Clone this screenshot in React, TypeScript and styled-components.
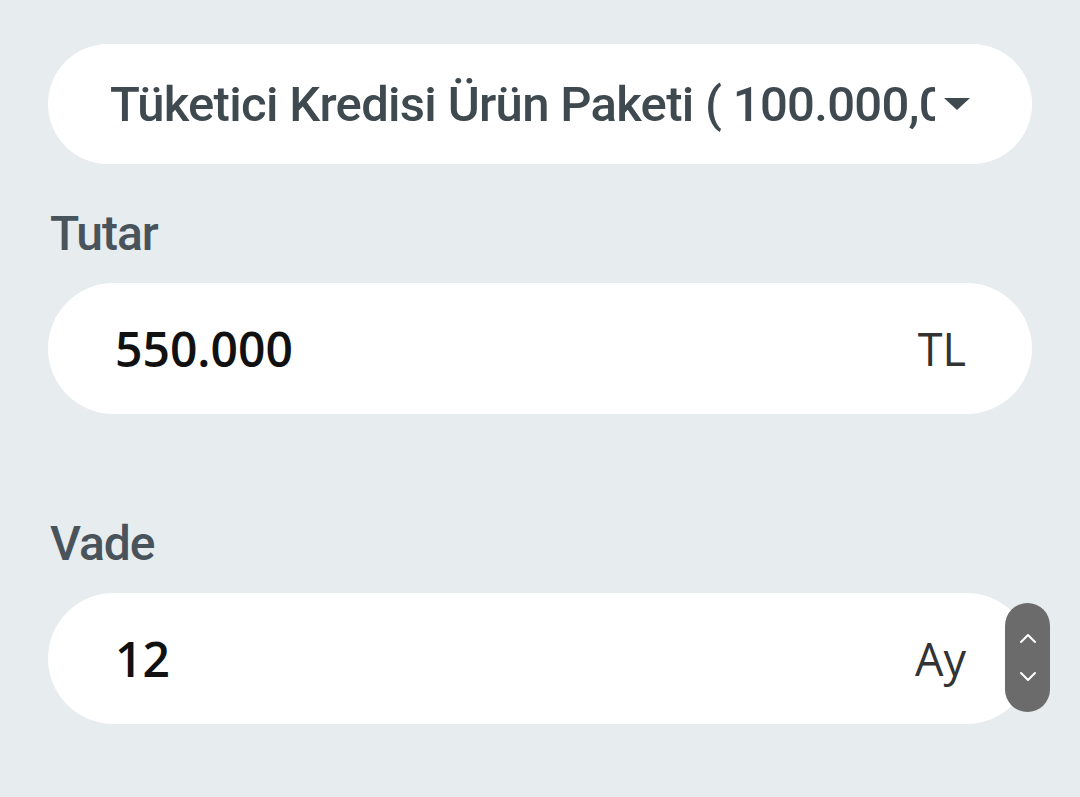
import React from "react";
import styled, { createGlobalStyle } from "styled-components";

const Global = createGlobalStyle`
  html, body { margin: 0; padding: 0; background: #e7ecef; }
  body { font-family: "Open Sans", "Noto Sans", sans-serif; }
`;

const Page = styled.div`
  width: 1080px;
  height: 797px;
  box-sizing: border-box;
  padding: 44px 48px 0 48px;
  display: flex;
  flex-direction: column;
  background: #e7ecef;
`;

const Select = styled.div`
  height: 120px;
  background: #fff;
  border-radius: 60px;
  display: flex;
  align-items: center;
  padding: 0 62px 0 62px;
  box-sizing: border-box;
`;

const SelectText = styled.div`
  flex: 1;
  min-width: 0;
  overflow: hidden;
  white-space: nowrap;
  font-family: "Roboto", sans-serif;
  font-weight: 500;
  font-size: 49px;
  color: #3f4950;
  letter-spacing: -0.7px;
`;

const Caret = styled.div`
  width: 0;
  height: 0;
  margin-left: 9px;
  border-left: 13px solid transparent;
  border-right: 13px solid transparent;
  border-top: 12px solid #3f4950;
`;

const Field = styled.div<{ $mb: number }>`
  display: flex;
  flex-direction: column;
  margin-bottom: ${(p) => p.$mb}px;
`;

const Label = styled.div`
  font-family: "Roboto", sans-serif;
  font-weight: 500;
  font-size: 48px;
  letter-spacing: -1px;
  color: #49535b;
  line-height: 60px;
  margin: 0 0 19px 2px;
`;

const InputRow = styled.div`
  position: relative;
  height: 131px;
  background: #fff;
  border-radius: 66px;
  display: flex;
  align-items: center;
  padding: 0 66px 0 67px;
  box-sizing: border-box;
`;

const Value = styled.div`
  flex: 1;
  font-family: "Open Sans", sans-serif;
  font-weight: 600;
  font-size: 48px;
  color: #111;
`;

const Unit = styled.div`
  font-family: "Open Sans", sans-serif;
  font-weight: 400;
  font-size: 45px;
  color: #333;
`;

const Spinner = styled.div`
  position: absolute;
  right: -18px;
  top: 10px;
  width: 45px;
  height: 109px;
  border-radius: 23px;
  background: #6b6b6b;
  display: flex;
  flex-direction: column;
  align-items: center;
  justify-content: center;
  gap: 27px;
`;

const Chevron = ({ up }: { up?: boolean }) => (
  <svg width="20" height="12" viewBox="0 0 20 12">
    <path
      d={up ? "M3 10 L10 3 L17 10" : "M3 2 L10 9 L17 2"}
      fill="none"
      stroke="#fff"
      strokeWidth="2"
      strokeLinecap="round"
      strokeLinejoin="round"
    />
  </svg>
);

export default function App() {
  return (
    <>
      <Global />
      <Page>
        <Field $mb={40}>
          <Select>
            <SelectText>Tüketici Kredisi Ürün Paketi ( 100.000,00 TL - 550.000,00 TL )</SelectText>
            <Caret />
          </Select>
        </Field>
        <Field $mb={100}>
          <Label>Tutar</Label>
          <InputRow>
            <Value>550.000</Value>
            <Unit>TL</Unit>
          </InputRow>
        </Field>
        <Field $mb={0}>
          <Label>Vade</Label>
          <InputRow>
            <Value>12</Value>
            <Unit>Ay</Unit>
            <Spinner>
              <Chevron up />
              <Chevron />
            </Spinner>
          </InputRow>
        </Field>
      </Page>
    </>
  );
}
